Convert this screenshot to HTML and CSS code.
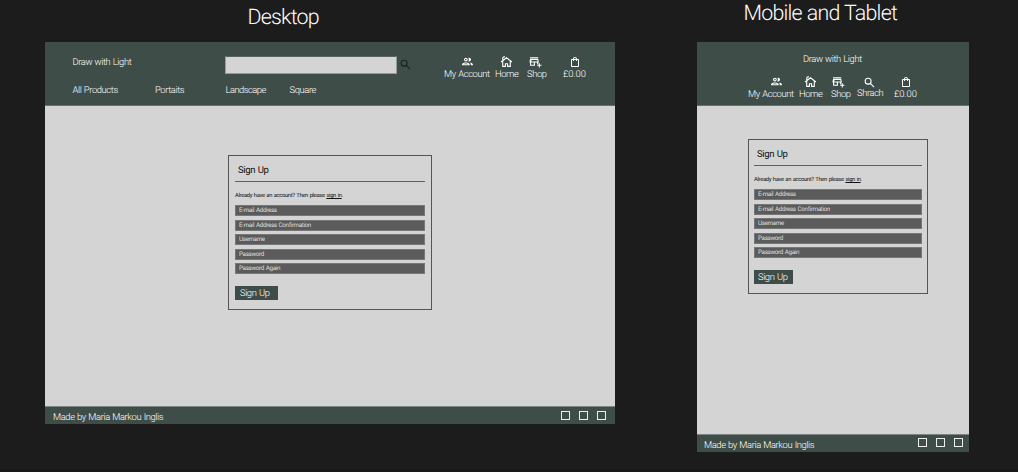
FILE: index.html
```
<!DOCTYPE html>
<html lang="en">
<head>
<meta charset="utf-8">
<title>Draw with Light - Sign Up</title>
<link rel="stylesheet" href="styles.css">
</head>
<body>
<svg class="defs" aria-hidden="true">
  <symbol id="people" viewBox="0 0 24 24"><path d="M9 13.75c-2.34 0-7 1.17-7 3.5V19h14v-1.75c0-2.33-4.66-3.5-7-3.5zM4.34 17c.84-.58 2.87-1.25 4.66-1.25s3.82.67 4.66 1.25H4.34zM9 12c1.93 0 3.5-1.57 3.5-3.5S10.93 5 9 5 5.5 6.57 5.5 8.5 7.07 12 9 12zm0-5c.83 0 1.5.67 1.5 1.5S9.83 10 9 10s-1.5-.67-1.5-1.5S8.17 7 9 7zm7.04 6.81c1.16.84 1.96 1.96 1.96 3.44V19h4v-1.75c0-2.02-3.5-3.17-5.96-3.44zM15 12c1.93 0 3.5-1.57 3.5-3.5S16.93 5 15 5c-.54 0-1.04.13-1.5.35.63.89 1 1.98 1 3.15s-.37 2.26-1 3.15c.46.22.96.35 1.5.35z"/></symbol>
  <symbol id="home" viewBox="0 0 24 24"><path fill="none" stroke="currentColor" stroke-width="2" d="M2 13 12 5l10 8M5 11v10h5v-5h4v5h5V11M5 9V6q0-2 4-3"/></symbol>
  <symbol id="shop" viewBox="0 0 24 24"><path d="M15 17h2v-3h1v-2l-1-5H2l-1 5v2h1v6h9v-6h4v3zm-6 1H4v-4h5v4zm-4.96-6l.6-3h10.72l.6 3H4.04zM2 4h15v2H2zM20 18v-3h-2v3h-3v2h3v3h2v-3h3v-2z"/></symbol>
  <symbol id="bag" viewBox="0 0 24 24"><path d="M18 6h-2c0-2.21-1.79-4-4-4S8 3.79 8 6H6c-1.1 0-2 .9-2 2v12c0 1.1.9 2 2 2h12c1.1 0 2-.9 2-2V8c0-1.1-.9-2-2-2zm-6-2c1.1 0 2 .9 2 2h-4c0-1.1.9-2 2-2zm6 16H6V8h2v2h2V8h4v2h2V8h2v12z"/></symbol>
  <symbol id="search" viewBox="0 0 24 24"><path fill="none" stroke="currentColor" stroke-width="2" d="M13.5 13.5 20.5 20.5M15 9.5a5.5 5.5 0 1 1-11 0a5.5 5.5 0 0 1 11 0z"/></symbol>
</svg>
<div class="canvas">
  <section class="desktop">
    <h1 class="title">Desktop</h1>
    <div class="board">
      <header class="header">
        <div class="top">
          <span class="brand">Draw with Light</span>
          <span class="input"></span>
          <svg class="icon find"><use href="#search"/></svg>
          <nav class="actions">
            <a class="account"><svg class="icon"><use href="#people"/></svg>My Account</a>
            <a class="house"><svg class="icon"><use href="#home"/></svg>Home</a>
            <a class="store"><svg class="icon"><use href="#shop"/></svg>Shop</a>
            <a class="basket"><svg class="icon"><use href="#bag"/></svg>£0.00</a>
          </nav>
        </div>
        <nav class="links"><a>All Products</a><a>Portaits</a><a class="tight">Landscape</a><a>Square</a></nav>
      </header>
      <main class="main">
        <form class="card">
          <h2>Sign Up</h2>
          <p>Already have an account? Then please <u>sign in</u>.</p>
          <div class="fields"><div>E-mail Address</div><div>E-mail Address Confirmation</div><div>Username</div><div>Password</div><div>Password Again</div></div>
          <div class="button">Sign Up</div>
        </form>
      </main>
      <footer class="footer"><span>Made by Maria Markou Inglis</span><i></i><i></i><i></i></footer>
    </div>
  </section>
  <section class="mobile">
    <h1 class="title">Mobile and Tablet</h1>
    <div class="board">
      <header class="header">
        <div class="brand">Draw with Light</div>
        <nav class="actions">
          <a class="account"><svg class="icon"><use href="#people"/></svg>My Account</a>
          <a class="house"><svg class="icon"><use href="#home"/></svg>Home</a>
          <a class="store"><svg class="icon"><use href="#shop"/></svg>Shop</a>
          <a class="lookup"><svg class="icon"><use href="#search"/></svg>Shrach</a>
          <a class="basket"><svg class="icon"><use href="#bag"/></svg>£0.00</a>
        </nav>
      </header>
      <main class="main">
        <form class="card">
          <h2>Sign Up</h2>
          <p>Already have an account? Then please <u>sign in</u>.</p>
          <div class="fields"><div>E-mail Address</div><div>E-mail Address Confirmation</div><div>Username</div><div>Password</div><div>Password Again</div></div>
          <div class="button">Sign Up</div>
        </form>
      </main>
      <footer class="footer"><span>Made by Maria Markou Inglis</span><i></i><i></i><i></i></footer>
    </div>
  </section>
</div>
</body>
</html>
```
FILE: styles.css
```
* { box-sizing: border-box; }
body {
  margin: 0;
  background: #1c1c1c;
  color: #fff;
  font: 300 9.4px/14px Roboto, "Noto Sans", sans-serif;
  letter-spacing: -.042em;
  word-spacing: .06em;
  text-rendering: geometricPrecision;
  white-space: nowrap;
}
h1, h2, p { margin: 0; font-weight: 300; }
.defs { display: none; }
.canvas {
  display: flex;
  gap: 82px;
  height: 472px;
  padding-left: 45px;
  border-bottom: 3px solid #181818;
}
.desktop { width: 570px; }
.mobile { width: 272px; }
.title { height: 42px; font-size: 21.4px; line-height: 30px; letter-spacing: -.037em; }
.desktop .title { padding: 3px 0 0 202.5px; }
.mobile .title { padding-left: 46.5px; line-height: 27px; }

.board { display: flex; flex-direction: column; background: #d4d4d4; }
.desktop .board { height: 382px; }
.mobile .board { height: 410px; }
.header { height: 64px; flex: none; background: #3f4d49; border-bottom: 1px solid #66716e; }
.icon { display: block; width: 13px; height: 13px; fill: currentColor; }

.top { display: flex; height: 42px; padding: 13px 0 0 27.5px; }
.desktop .brand { width: 152.5px; padding-top: 1px; }
.input { width: 172px; height: 18px; margin-top: 1px; background: #d4d4d4; border: 1px solid #949b99; border-top-color: #59645f; }
.find { margin: 3px 0 0 2px; color: #17201d; }
.actions { display: flex; }
.actions a { display: block; line-height: 14px; }
.desktop .actions { margin: 1px 0 0 32px; }
.actions .icon { margin: -1px 0 0; }
.account { width: 51px; }
.actions .account .icon { margin-left: 17px; }
.house { width: 32px; }
.actions .house .icon { margin-left: 5px; }
.store { width: 36px; }
.actions .store .icon { margin-left: 2px; }
.basket { letter-spacing: -.01em; }
.actions .basket .icon { width: 12px; height: 12px; margin: 0 0 0 6px; }
.links { display: grid; grid-template-columns: 82.5px 70.5px 64px auto; padding-left: 27.5px; }
.tight { letter-spacing: -.055em; }

.mobile .brand { padding: 11px 0 0 106px; height: 34px; }
.mobile .actions { padding-left: 51px; }
.mobile .account .icon { margin-left: 22px; }
.mobile .store { width: 26px; }
.mobile .store .icon { margin-left: 1px; }
.lookup { width: 37px; }
.actions .lookup .icon { margin: 0 0 -2px 6px; }

.main { flex: 1; }
.card {
  display: block;
  width: 204px;
  height: 155px;
  margin: 49px 0 0 183px;
  padding: 7px 6px 0;
  border: 1px solid #555;
  color: #111;
}
.card h2 { height: 19px; padding-left: 3px; font-size: 9.6px; line-height: 16px; font-weight: 400; border-bottom: 1px solid #606060; }
.card p { margin-top: 9px; font-size: 5.8px; font-weight: 400; line-height: 11px; letter-spacing: -.055em; }
.card u { text-underline-offset: 1px; text-decoration-thickness: .5px; }
.fields { display: grid; gap: 3.5px; margin-top: 3px; }
.fields div { height: 11px; padding-left: 3px; font-size: 6.3px; line-height: 9px; font-weight: 400; letter-spacing: -.055em; color: #dedede; background: #5b5b5b; border: 1px solid #777; }
.button { width: 43px; height: 14px; margin-top: 12px; padding-left: 5px; line-height: 15px; background: #3f4d49; color: #fff; }
.mobile .card { width: 180px; margin: 33px 0 0 51px; padding: 7px 5px 0; }
.mobile .button { width: 39px; padding-left: 4px; }

.footer {
  display: flex;
  flex: none;
  align-items: flex-start;
  height: 18px;
  padding: 4px 9px 0 8px;
  background: #3f4d49;
  border-top: 1px solid #7d8583;
}
.footer span { flex: 1; line-height: 14px; }
.footer i { width: 9px; height: 9px; margin-left: 9px; border: 1px solid #eee; }
.mobile .footer { padding: 3px 6px 0 7px; }
.mobile .footer span { line-height: 15px; }
```
